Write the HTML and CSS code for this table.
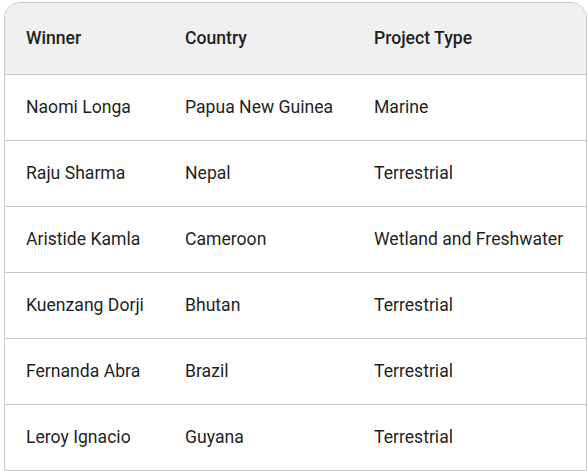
FILE: index.html
```html
<!DOCTYPE html>
<html>
<head>
<meta charset="utf-8">
<link rel="stylesheet" href="styles.css">
</head>
<body>
<div class="table-wrap">
  <table class="winners">
    <thead>
      <tr><th class="c1">Winner</th><th class="c2">Country</th><th class="c3">Project Type</th></tr>
    </thead>
    <tbody>
      <tr><td>Naomi Longa</td><td>Papua New Guinea</td><td>Marine</td></tr>
      <tr><td>Raju Sharma</td><td>Nepal</td><td>Terrestrial</td></tr>
      <tr><td>Aristide Kamla</td><td>Cameroon</td><td>Wetland and Freshwater</td></tr>
      <tr><td>Kuenzang Dorji</td><td>Bhutan</td><td>Terrestrial</td></tr>
      <tr><td>Fernanda Abra</td><td>Brazil</td><td>Terrestrial</td></tr>
      <tr><td>Leroy Ignacio</td><td>Guyana</td><td>Terrestrial</td></tr>
    </tbody>
  </table>
</div>
</body>
</html>
```
FILE: styles.css
```css
html, body {
  margin: 0;
  padding: 0;
  background: #ffffff;
}
body {
  padding: 2px 1px 0 4px;
  font-family: Roboto, "Liberation Sans", sans-serif;
  color: #1f1f1f;
}
.table-wrap {
  border: 1px solid #c7c7c7;
  border-radius: 16px 16px 0 0;
  overflow: hidden;
}
.winners {
  width: 100%;
  border-collapse: collapse;
  table-layout: fixed;
  font-size: 17.6px;
}
.winners th {
  background: #f0f0f0;
  font-weight: 500;
  text-align: left;
  height: 69px;
  padding: 0 0 2px 21px;
  border-bottom: 1px solid #c7c7c7;
}
.winners td {
  height: 63px;
  padding: 0 0 2px 21px;
  border-bottom: 1px solid #c7c7c7;
  white-space: nowrap;
}
.winners tbody tr:last-child td {
  border-bottom: none;
}
.c1 { width: 138px; }
.c2 { width: 168px; }
```
